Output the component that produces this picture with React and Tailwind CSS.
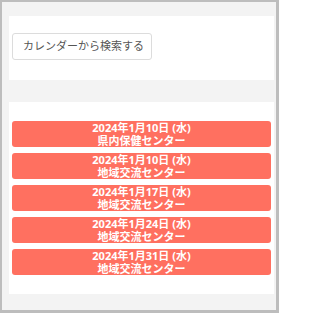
import React from "react";

const items = [
  ["2024年1月10日 (水)", "県内保健センター"],
  ["2024年1月10日 (水)", "地域交流センター"],
  ["2024年1月17日 (水)", "地域交流センター"],
  ["2024年1月24日 (水)", "地域交流センター"],
  ["2024年1月31日 (水)", "地域交流センター"],
];

export default function App() {
  return (
    <div
      className="w-[279px] h-[313px] overflow-hidden border-t-2 border-l-2 border-r-[3px] border-b-[3px] border-[#bdbdbd] bg-[#f3f3f3]"
      style={{ fontFamily: '"Noto Sans", "Noto Sans CJK JP", sans-serif' }}
    >
      <div className="pl-[7px] pr-[2px] pt-[14px]">
        <div className="h-[64px] bg-white px-[3px] pt-[16px]">
          <button className="h-[27px] w-[140px] rounded-[3px] border border-[#dcdcdc] bg-white pl-[10px] text-left text-[11px] text-[#555]">
            カレンダーから検索する
          </button>
        </div>
        <div className="mt-[22px] flex h-[192px] flex-col gap-[6px] bg-white px-[3px] pt-[19px]">
          {items.map(([d, p], i) => (
            <div
              key={i}
              className="flex h-[26px] flex-col items-center justify-center rounded-[3px] bg-[#ff7060] text-[11px] font-bold leading-[13px] text-white"
            >
              <div>{d}</div>
              <div>{p}</div>
            </div>
          ))}
        </div>
      </div>
    </div>
  );
}
